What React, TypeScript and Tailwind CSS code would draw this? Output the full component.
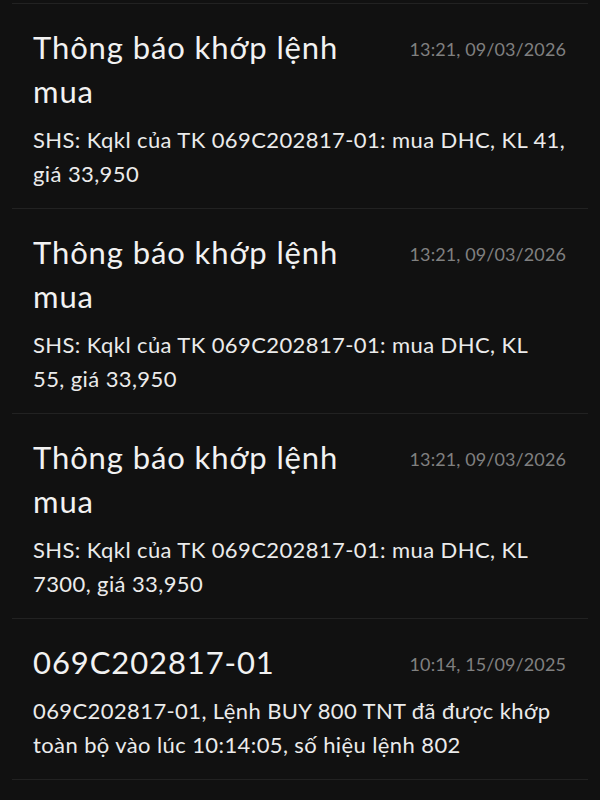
type Notice = {
  title: string[];
  time: string;
  body: string[];
};

const notices: Notice[] = [
  {
    title: ['Thông báo khớp lệnh', 'mua'],
    time: '13:21, 09/03/2026',
    body: ['SHS: Kqkl của TK 069C202817-01: mua DHC, KL 41,', 'giá 33,950'],
  },
  {
    title: ['Thông báo khớp lệnh', 'mua'],
    time: '13:21, 09/03/2026',
    body: ['SHS: Kqkl của TK 069C202817-01: mua DHC, KL', '55, giá 33,950'],
  },
  {
    title: ['Thông báo khớp lệnh', 'mua'],
    time: '13:21, 09/03/2026',
    body: ['SHS: Kqkl của TK 069C202817-01: mua DHC, KL', '7300, giá 33,950'],
  },
  {
    title: ['069C202817-01'],
    time: '10:14, 15/09/2025',
    body: ['069C202817-01, Lệnh BUY 800 TNT đã được khớp', 'toàn bộ vào lúc 10:14:05, số hiệu lệnh 802'],
  },
];

export default function App() {
  return (
    <div className="w-[600px] h-[800px] overflow-hidden bg-[#111111] pt-[3px] font-['Lato','Noto_Sans',sans-serif]">
      <div className="mx-3 border-t border-[#222222]">
        {notices.map((n, i) => (
          <div key={i} className="border-b border-[#222222] pl-[21px] pr-[22px] pt-[21px] pb-[17px]">
            <div className="flex justify-between items-start">
              <div className="text-[31px] leading-[44px] tracking-[0.9px] text-[#f2f2f2]">
                {n.title.map((t, j) => (
                  <div key={j} className="whitespace-nowrap">{t}</div>
                ))}
              </div>
              <div className="pt-[5px] text-[18px] leading-[39px] tracking-[0.1px] text-[#808080] whitespace-nowrap">{n.time}</div>
            </div>
            <div className="mt-[10px] text-[22px] leading-[34px] tracking-[0.4px] text-[#ebebeb]">
              {n.body.map((t, j) => (
                <div key={j} className="whitespace-nowrap">{t}</div>
              ))}
            </div>
          </div>
        ))}
      </div>
    </div>
  );
}
